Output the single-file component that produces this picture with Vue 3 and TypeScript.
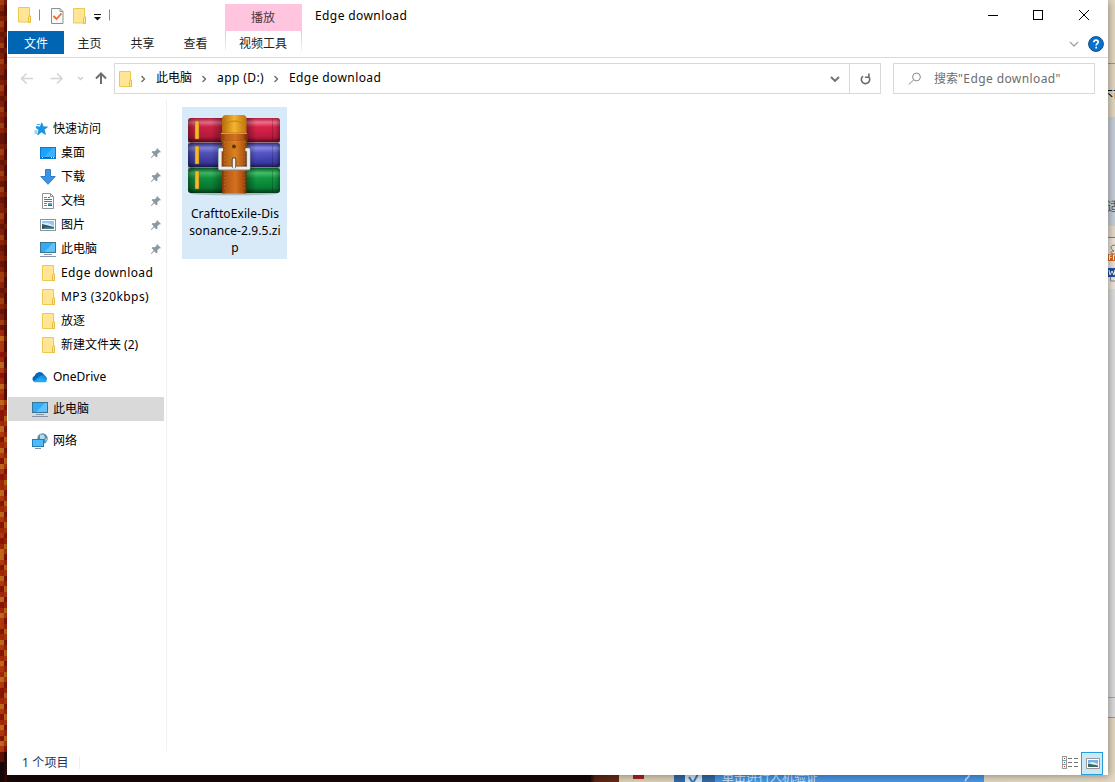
<script setup lang="ts">
interface NavItem {
  label: string
  icon: string
  pinned?: boolean
  latin?: boolean
}

const quickItems: NavItem[] = [
  { label: '桌面', icon: 'desktop', pinned: true },
  { label: '下载', icon: 'download', pinned: true },
  { label: '文档', icon: 'document', pinned: true },
  { label: '图片', icon: 'picture', pinned: true },
  { label: '此电脑', icon: 'pc', pinned: true },
  { label: 'Edge download', icon: 'folder', latin: true },
  { label: 'MP3 (320kbps)', icon: 'folder', latin: true },
  { label: '放逐', icon: 'folder' },
  { label: '新建文件夹 (2)', icon: 'folder' },
]

const roots = [
  { label: 'OneDrive', icon: 'cloud', active: false },
  { label: '此电脑', icon: 'pc', active: true },
  { label: '网络', icon: 'network', active: false },
]

const crumbs = ['此电脑', 'app (D:)', 'Edge download']
const tabs = ['主页', '共享', '查看']

// Wallpaper blocks along the left edge of the desktop
const upper = ['#a5400f', '#8f2408', '#6a1507', '#83200a']
const lower = ['#c06a1c', '#b23a0d', '#8c1608', '#a6280a']
const cells = Array.from({ length: 147 }, (_, i) => {
  const y = Math.round(i * 5.33)
  const dark = y > 748
  const set = y < 330 ? upper : lower
  return {
    y,
    left: dark ? (y > 757 ? '#150807' : '#651009') : set[(i + (i % 13 > 8 ? 1 : 0)) % 4],
    right: dark ? '#2c0907' : y < 400 ? (i % 3 ? '#5a0f06' : '#7a1c08') : set[(i + 2) % 4],
  }
})
</script>

<template>
  <div class="screen">
    <svg class="wall" width="7" height="782" shape-rendering="crispEdges">
      <g v-for="c in cells" :key="c.y">
        <rect x="0" :y="c.y" width="4" height="6" :fill="c.left" />
        <rect x="4" :y="c.y" width="3" height="6" :fill="c.right" />
      </g>
    </svg>

    <div class="column">
      <div class="window">
        <header class="titlebar">
          <svg class="quick" width="105" height="31" viewBox="0 0 105 31">
            <path d="M11.500 7.500h11v8.500h1v6h-12z" fill="#ffe594" stroke="#efc94f" /><path d="M21.500 22.500v-5l1-1.500h1v6.500z" fill="#ffe799" stroke="#e7bd43" />
            <path d="M32.500 9.500v11M102.500 9.500v11" stroke="#8a8a8a" />
            <path d="M44.500 8.500h8.500l3 3v12h-11.500z" fill="#f9f9f9" stroke="#8b8f93" />
            <path d="M53 8.500v3h3" fill="none" stroke="#999" />
            <path d="M46.500 16l3 3 5-5.500" fill="none" stroke="#ee6a28" stroke-width="1.800" />
            <path d="M66.500 8.500h11v8.500h1v6h-12z" fill="#ffe594" stroke="#efc94f" /><path d="M76.500 23.500v-5l1-1.500h1v6.500z" fill="#ffe799" stroke="#e7bd43" />
            <path d="M87 14h7v1h-7z" fill="#111" /><path d="M87 17h7l-3.500 3.500z" fill="#111" />
          </svg>
          <div class="context">播放</div>
          <div class="caption en">Edge download</div>
          <svg class="controls" width="120" height="31" viewBox="0 0 120 31" fill="none" stroke="#000">
            <path d="M0 15.500h10M45.500 10.500h9v9h-9z" shape-rendering="crispEdges" /><path d="M91 10l10 10M101 10l-10 10" />
          </svg>
        </header>

        <nav class="ribbon">
          <div class="file-tab">文件</div>
          <div v-for="t in tabs" :key="t" class="tab">{{ t }}</div>
          <div class="video-tab">视频工具</div>
          <svg class="help" width="36" height="20" viewBox="0 0 36 20">
            <path d="M2 8l4 4 4-4" fill="none" stroke="#a2a2a2" stroke-width="1.300" />
            <circle cx="28" cy="10" r="7.400" fill="#0672ce" stroke="#0b4b8c" />
            <path d="M25.800 8.200c0-3 4.600-2.700 4.400-.1-.1 1.500-2 1.600-2 3.300M28.200 12.800v1.700" fill="none" stroke="#fff" stroke-width="1.700" />
          </svg>
        </nav>

        <div class="address-row">
          <svg class="arrows" width="93" height="31" viewBox="0 0 93 31" fill="none">
            <path d="M26 15.500H14.500M19.500 10.500l-5 5 5 5M43.500 15.500H55M50 10.500l5 5-5 5" stroke="#d4d4d4" stroke-width="1.500" />
            <path d="M71 14l2.500 2.500L76 14" stroke="#cfcfcf" stroke-width="1.500" />
            <path d="M94 21V10.500M89 15.500l5-5 5 5" stroke="#6d6d6d" stroke-width="2" />
          </svg>
          <div class="address">
            <svg class="addr-folder" width="15" height="18" viewBox="0 0 15 18"><path d="M1.500 1.500h11V10h1v6.500h-12z" fill="#ffe594" stroke="#efc94f" /><path d="M11.500 16.500v-5l1-1.500h1v6.500z" fill="#ffe799" stroke="#e7bd43" /></svg>
            <template v-for="c in crumbs" :key="c">
              <svg class="sep" width="6" height="8" viewBox="0 0 6 8"><path d="M1.500 1l3 3-3 3" fill="none" stroke="#6c6c6c" stroke-width="1.400" /></svg>
              <span class="crumb" :class="{ en: c !== '此电脑' }">{{ c }}</span>
            </template>
            <svg class="drop" width="12" height="10" viewBox="0 0 12 10"><path d="M2 3l4 4 4-4" fill="none" stroke="#6f6f6f" stroke-width="1.900" /></svg>
            <div class="refresh">
              <svg width="13" height="14" viewBox="0 0 13 14" fill="none" stroke="#6a6a6a" stroke-width="1.600"><path d="M9.700 4.700a4.200 4.200 0 1 1-5.700-.6M9.900 1.500v3.700h-4" /></svg>
            </div>
          </div>
          <div class="search">
            <svg width="14" height="14" viewBox="0 0 14 14" fill="none" stroke="#8f8585"><circle cx="8.500" cy="5" r="3.900" /><path d="M5.700 7.800L.8 12.500" /></svg>
            <span>搜索<span class="en">"Edge download"</span></span>
          </div>
        </div>

        <main class="body">
          <aside class="nav">
            <div class="nav-row root quick-root">
              <svg class="ico" width="16" height="16" viewBox="0 0 16 16"><path d="M9.800 1.800l1.500 4 4.200.1-3.300 2.700 1.300 4.900-3.900-2.500-4 3 1.300-4.900-3.100-2.600 4.200-.4z" fill="#1696e9" stroke="#0a7fc9" stroke-width=".6" /><path d="M5 3.500h3M4 5.500h3M2.500 10h3M2.500 12h3" stroke="#46aef0" /></svg>
              <span>快速访问</span>
            </div>
            <div v-for="item in quickItems" :key="item.label" class="nav-row child">
              <svg class="ico" width="16" height="16" viewBox="0 0 16 16">
                <template v-if="item.icon === 'desktop'"><rect x=".5" y="2.500" width="15" height="11" fill="#1da2fb" stroke="#087bce" /><path d="M4 12L13 3h2v9z" fill="#3cb1ff" /><path d="M1 12.500h14" stroke="#086cab" /><path d="M2 12.500h1M11 12.500h1M13 12.500h1" stroke="#fff" /></template>
                <path v-else-if="item.icon === 'download'" d="M5.500.5h5v7h4.700L8 15.300.8 7.500h4.700z" fill="#3d94e5" stroke="#2a7fcc" />
                <template v-else-if="item.icon === 'document'"><path d="M2.500.5h8l3 3v12h-11z" fill="#fff" stroke="#8d9397" /><path d="M10.500.5v3h3" fill="none" stroke="#8d9397" /><path d="M8 4.500h2M4 6.500h8M4 8.500h8" stroke="#1688d0" /><path d="M4 4.500h3M4 10.500h3M4 12.500h3" stroke="#5287a9" /><path d="M8 10h4v3H8z" fill="#45a4cf" /><path d="M8 12h4v1H8z" fill="#37674a" /></template>
                <template v-else-if="item.icon === 'picture'"><rect x=".5" y="2.500" width="15" height="11" fill="#fff" stroke="#8d9397" /><path d="M2 4h12v8H2z" fill="#8ec8f3" /><path d="M2 6h6l6 3v1H2z" fill="#d9eefa" /><path d="M2 7l6 1.500 6 1.500v2H2z" fill="#31585b" /><path d="M5 10.500h9V12H3z" fill="#4b83a9" /></template>
                <template v-else-if="item.icon === 'pc'"><rect x=".5" y="1.500" width="15" height="10" fill="#31aafc" stroke="#3c7592" /><path d="M4 11L13 2h2v9z" fill="#61c0ff" /><path d="M4 13.500h8M0 15.500h16" stroke="#8594a8" /></template>
                <template v-else><path d="M2.500.5h11v8.500h1v6.500h-12z" fill="#ffe594" stroke="#efc94f" /><path d="M12.500 15.500v-5l1-1.500h1v6.500z" fill="#ffe799" stroke="#e7bd43" /></template>
              </svg>
              <span :class="{ en: item.latin }">{{ item.label }}</span>
              <svg v-if="item.pinned" class="pin" width="12" height="12" viewBox="0 0 12 12"><path d="M7 1L11 5l-1 .5-.7-.2-2 2 .2 2-1 1.200-2.300-2.300L1.500 11l-.7-.5 3-3.200L1.500 5l1.100-1 2.200.2 2-2-.3-.8z" fill="#8c98a0" /></svg>
            </div>
            <div v-for="r in roots" :key="r.label" class="nav-row root spaced" :class="{ active: r.active }">
              <svg class="ico" width="16" height="16" viewBox="0 0 16 16">
                <template v-if="r.icon === 'cloud'"><path d="M3 13A3.200 3.200 0 0 1 2.700 6.800a5 5 0 0 1 9-1.500L15 9l-3 4z" fill="#0866bd" /><path d="M3 13l-1.500-1 7-5.300a4 4 0 0 1 4.500 1A2.800 2.800 0 0 1 13 13z" fill="#1995e8" /><path d="M2 12.700L9 8.500l6 3.800-2 .9H3z" fill="#27a7f2" /></template>
                <template v-else-if="r.icon === 'pc'"><rect x=".5" y="1.500" width="15" height="10" fill="#31aafc" stroke="#3c7592" /><path d="M4 11L13 2h2v9z" fill="#61c0ff" /><path d="M4 13.500h8M0 15.500h16" stroke="#8594a8" /></template>
                <template v-else><circle cx="10.500" cy="5.500" r="5.200" fill="#568faa" /><path d="M8 1.500l4 .2 1 3-2 2-3-1zM13 6l2-1-1 4z" fill="#b5dbe6" /><rect x=".5" y="6.500" width="11" height="7" fill="#4cbbff" stroke="#277cae" /><path d="M3 15.500h6" stroke="#8091a0" /></template>
              </svg>
              <span>{{ r.label }}</span>
            </div>
          </aside>

          <section class="files">
            <div class="tile">
              <svg class="archive" width="105" height="93" viewBox="182 107 105 93">
                <defs>
                  <linearGradient id="red" x2="0" y2="1"><stop offset="0" stop-color="#b51c3d" /><stop offset=".18" stop-color="#f0708e" /><stop offset=".36" stop-color="#dc2449" /><stop offset=".78" stop-color="#bd1a3f" /><stop offset="1" stop-color="#560718" /></linearGradient>
                  <linearGradient id="blue" x2="0" y2="1"><stop offset="0" stop-color="#312f82" /><stop offset=".2" stop-color="#8789e6" /><stop offset=".4" stop-color="#5656c8" /><stop offset=".8" stop-color="#3b3aa4" /><stop offset="1" stop-color="#191747" /></linearGradient>
                  <linearGradient id="green" x2="0" y2="1"><stop offset="0" stop-color="#075d29" /><stop offset=".2" stop-color="#41c268" /><stop offset=".4" stop-color="#129a43" /><stop offset=".8" stop-color="#087d33" /><stop offset="1" stop-color="#043b19" /></linearGradient>
                  <linearGradient id="ends"><stop offset="0" stop-opacity=".4" /><stop offset=".08" stop-opacity=".1" /><stop offset=".25" stop-opacity=".05" /><stop offset=".37" stop-opacity=".35" /><stop offset=".64" stop-opacity=".35" /><stop offset=".74" stop-opacity="0" /><stop offset=".95" stop-opacity=".03" /><stop offset="1" stop-opacity=".35" /></linearGradient>
                  <linearGradient id="leather"><stop offset="0" stop-color="#7d370a" /><stop offset=".18" stop-color="#b85a14" /><stop offset=".55" stop-color="#d2721f" /><stop offset=".85" stop-color="#b1500f" /><stop offset="1" stop-color="#652b07" /></linearGradient>
                  <linearGradient id="gold"><stop offset="0" stop-color="#b4690c" /><stop offset=".5" stop-color="#f4b52f" /><stop offset="1" stop-color="#bf720d" /></linearGradient>
                </defs>
                <ellipse cx="234" cy="193.500" rx="44" ry="1.800" fill="#a9bcc4" />
                <rect x="188" y="118" width="92" height="24.500" rx="3" fill="url(#red)" />
                <rect x="188" y="143" width="92" height="24.500" rx="3" fill="url(#blue)" />
                <rect x="188" y="168" width="92" height="25" rx="3" fill="url(#green)" />
                <rect x="188" y="118" width="92" height="75" rx="3" fill="url(#ends)" />
                <path d="M272.500 119v22M272.500 145v22M272.500 170v22" stroke="#000" stroke-opacity=".18" />
                <g fill="#f5b92d" stroke="#8d6010" stroke-width=".5"><rect x="195" y="121" width="4" height="18" /><rect x="195" y="146" width="4" height="18" /><rect x="195" y="171" width="4" height="18" /></g>
                <path d="M222 165h24.500v28.500H222z" fill="url(#leather)" />
                <path d="M222 133h24.500v32H222z" fill="url(#gold)" />
                <path d="M222 118q1-3 4-3h17q3 0 3.500 3v18H222z" fill="url(#gold)" />
                <path d="M223.500 129q2-8 11-8t10.500 8" fill="none" stroke="#c87d12" />
                <path d="M221 133h26v8h-26z" fill="url(#leather)" stroke="#9f510e" stroke-width=".5" />
                <path d="M222 141.500h24.500V165H222z" fill="url(#leather)" fill-opacity=".75" />
                <path d="M221 133.500h26" stroke="#e59c34" />
                <path d="M224.500 142v49M244.500 142v49" stroke="#e39b4a" stroke-opacity=".6" stroke-dasharray="1.500 2" stroke-width=".6" />
                <circle cx="234" cy="146.500" r="2" fill="#63310b" />
                <path d="M223 150h-3v18.500h28.500V150h-3" fill="none" stroke="#83888f" stroke-width="4" stroke-linejoin="round" />
                <path d="M223 149.700h-3v18.500h28.500v-18.500h-3" fill="none" stroke="#eceef0" stroke-width="2.800" stroke-linejoin="round" />
                <path d="M234 166v-6.500" stroke="#54402e" stroke-width="4.600" stroke-linecap="round" /><path d="M234 167v-7.500" stroke="#f0f0f0" stroke-width="2.600" stroke-linecap="round" />
              </svg>
              <div class="filename">CrafttoExile-Dis<br />sonance-2.9.5.zi<br />p</div>
            </div>
          </section>
        </main>

        <footer class="status">
          <span class="count">1 个项目</span><i class="tick"></i>
          <svg class="list-view" width="18" height="14" viewBox="0 0 18 14" fill="none" shape-rendering="crispEdges"><path d="M.5.500h4v12h-4zM0 4.500h5M0 8.500h5" stroke="#9a9a9a" /><path d="M6 2.500h4M12 2.500h4M6 6.500h4M12 6.500h4M6 10.500h4M12 10.500h4" stroke="#737373" /><path d="M2 2h1v1H2z" fill="#555" /><path d="M2 6h1v1H2z" fill="#258dd2" /><path d="M2 10h1v1H2z" fill="#c22" /></svg>
          <div class="thumb-view"><svg width="14" height="11" viewBox="0 0 14 11"><path d="M.5.500h13v10H.5z" fill="#fff" stroke="#999" /><path d="M2 2h10v7H2z" fill="#75b2ee" /><path d="M2 5l5-1 5 2v2H2z" fill="#e1eef7" /><path d="M2 5.500l10 2V9H2z" fill="#3d6960" /></svg></div>
        </footer>
      </div>

      <div class="below">
        <div class="character"></div>
        <div class="check"><svg width="17" height="7" viewBox="0 0 17 7"><path d="M4 2l4 6 5-9" fill="none" stroke="#337ab5" stroke-width="2" /></svg></div>
        <div class="verify"><span>单击进行人机验证</span><b>?</b></div>
      </div>
    </div>

    <div class="behind">
      <div class="peek-top"><span>不可</span></div>
      <div class="peek-blue"><span>适</span></div>
      <div class="peek-tools">
        <svg width="7" height="63" viewBox="0 0 7 63"><path d="M0 11.500h7" stroke="#887f70" /><path d="M0 12h7v51H0z" fill="#eee8dd" /><path d="M7 19c-6 0-4 5-1 6-5 1-4 3 1 3" fill="none" stroke="#8d7165" /><path d="M0 28h7v7H0z" fill="#d56925" /><path d="M1.500 34v-5h2M1.500 31.500h2M5.500 34v-5h2" stroke="#fff" fill="none" /><path d="M0 42h7v9H0z" fill="#2450a4" /><path d="M1 44l1 5 2-4 2 4 1-5" stroke="#fff" fill="none" /><path d="M2.500 51v4H7" fill="none" stroke="#8a8f92" /></svg>
      </div>
      <div class="peek-grey"></div>
      <div class="peek-sand"></div>
    </div>
  </div>
</template>

<style>
html, body { margin: 0; overflow: hidden; }
</style>

<style scoped>
.screen { width: 1115px; height: 782px; display: flex; overflow: hidden; background: #170807; font: 12px/16px "Noto Sans", "Noto Sans CJK SC", sans-serif; color: #000; }
svg { display: block; flex: none; }
.column { width: 1101px; flex: none; }
.window { height: 775px; background: #fff; display: flex; flex-direction: column; position: relative; z-index: 2; box-shadow: 1px 1px 8px rgba(0, 0, 0, .38); }
.en { letter-spacing: .4px; }
.titlebar { height: 31px; display: flex; }
.context { margin-left: 113px; margin-top: 4px; width: 76px; padding-right: 1px; height: 27px; line-height: 27px; text-align: center; background: #ffc5df; color: #4d3540; }
.caption { margin-left: 13px; line-height: 31px; }
.controls { margin-left: auto; }
.ribbon { height: 26px; display: flex; border-bottom: 1px solid #dadada; line-height: 26px; color: #222; }
.file-tab { margin-left: 1px; width: 56px; height: 23px; line-height: 25px; background: #0065b3; color: #fff; text-align: center; }
.tab { width: 53px; text-align: center; position: relative; left: -1px; }
.video-tab { margin-left: 2px; width: 74px; padding-right: 1px; height: 20px; text-align: center; border: 1px solid; border-width: 0 1px; border-image: linear-gradient(#c9c9c9, #f7f7f7) 1; }
.help { margin: 3px 4px 0 auto; }
.address-row { height: 31px; margin-top: 5px; display: flex; }
.arrows { overflow: visible; }
.address { margin-left: 14px; box-sizing: border-box; width: 767px; height: 31px; border: 1px solid #d9d9d9; display: flex; align-items: center; }
.addr-folder { margin: 0 6px 0 3px; }
.sep { margin: 0 10px 0 1px; }
.crumb { margin-right: 8px; line-height: 27px; padding-bottom: 2px; white-space: nowrap; }
.drop { margin-left: auto; margin-right: 8px; }
.refresh { width: 30px; height: 29px; border-left: 1px solid #d9d9d9; display: flex; align-items: center; justify-content: center; }
.search { margin-left: 12px; width: 200px; height: 29px; border: 1px solid #d9d9d9; display: flex; align-items: center; color: #6d6d6d; }
.search svg { margin: 0 12px 0 14px; }
.body { flex: 1; display: flex; min-height: 0; }
.nav { width: 159px; border-right: 1px solid #f1f1f1; margin-top: 6px; }
.nav-row { height: 24px; display: flex; align-items: center; white-space: nowrap; width: 156px; margin-left: 1px; }
.root .ico { margin: 0 5px 0 24px; }
.child .ico { margin: 0 5px 0 32px; }
.quick-root { margin-top: 17px; }
.spaced { margin-top: 8px; }
.active { background: #d9d9d9; }
.pin { margin-left: auto; margin-right: 2px; }
.files { padding: 13px 0 0 15px; }
.tile { width: 105px; height: 152px; background: #d8e9f8; }
.filename { line-height: 17px; text-align: center; padding: 5px 0 0 1px; letter-spacing: .1px; }
.status { height: 24px; display: flex; align-items: center; }
.count { margin-left: 15px; color: #233557; letter-spacing: .15px; }
.tick { margin-left: 10px; width: 1px; height: 12px; background: #eee; }
.list-view { margin-left: auto; margin-right: 1px; }
.thumb-view { box-sizing: border-box; width: 22px; height: 23px; margin-right: 5px; background: #cce8f6; border: 1px solid #269edb; display: flex; align-items: center; justify-content: center; padding-left: 2px; }
.below { height: 7px; display: flex; overflow: hidden; background: linear-gradient(90deg, #180707 583px, #592415 588px, #652b17 612px, #ddd2b8 612px, #e4d9c3); }
.character { width: 11px; height: 4px; background: #a92222; margin-left: 626px; }
.check { margin-left: 30px; width: 41px; background: #316aa4; }
.check svg { background: #dce4ee; margin-left: 11px; }
.verify { width: 269px; background: #4897e7; color: #d7e8fa; display: flex; justify-content: space-between; }
.verify span { margin: -5px 0 0 7px; line-height: 16px; }
.verify b { margin: -6px 14px 0 0; font-size: 18px; font-weight: 400; line-height: 18px; }
.behind { width: 7px; flex: none; overflow: hidden; background: #e4d9c3; }
.peek-top { height: 53px; margin-top: 63px; border-top: 1px solid #aa9776; overflow: hidden; }
.peek-top span { display: block; width: 30px; margin: 24px 0 0 -7px; }
.peek-blue { height: 109px; background: #c8d0d7; overflow: hidden; }
.peek-blue span { display: block; width: 20px; margin: 82px 0 0 -1px; color: #555; }
.peek-tools { height: 63px; background: #e4dccb; }
.peek-grey { height: 429px; background: linear-gradient(#dedede 408px, #aaa 408px, #aaa 409px, #dedede 409px, #dedede 428px, #999 428px); }
.peek-sand { height: 70px; background: #e4d9c3; }
</style>
